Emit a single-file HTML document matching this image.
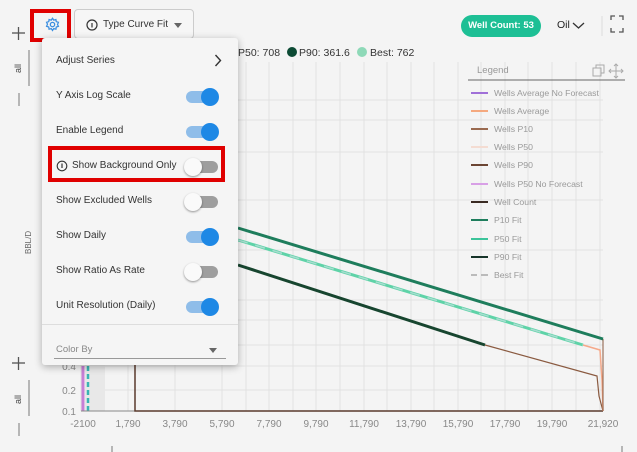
<!DOCTYPE html>
<html><head><meta charset="utf-8"><style>
*{margin:0;padding:0;box-sizing:border-box}
body{width:637px;height:452px;overflow:hidden;background:#f4f4f4;font-family:"Liberation Sans",sans-serif;position:relative;color:#333}
.abs{position:absolute}
.menu{position:absolute;left:42px;top:38px;width:196px;height:327px;background:#f5f5f5;border-radius:3px;box-shadow:0 2px 8px rgba(0,0,0,.3)}
.it{position:absolute;left:14px;font-size:10px;color:#333}
.tg{position:absolute;left:144px;width:32px;height:12px;border-radius:6px}
.tg.on{background:#8fbde9}
.tg.off{background:#9e9e9e}
.tg i{position:absolute;top:-3px;width:18px;height:18px;border-radius:50%;display:block}
.tg.on i{right:-1px;background:#1e88e5}
.tg.off i{left:-2px;background:#fafafa;box-shadow:0 1px 2px rgba(0,0,0,.4)}
.lg{position:absolute;left:471px;font-size:8.7px;color:#9a9a9a}
.lg b{display:inline-block;width:17px;height:2px;vertical-align:middle;margin-right:6px;margin-top:-2px}
</style></head><body>
<svg class="abs" style="left:0;top:0" width="637" height="452">
 <g stroke="#e2e2e2" stroke-width="1">
  <line x1="81" y1="62" x2="81" y2="411"/>
  <line x1="128" y1="62" x2="128" y2="411"/><line x1="175" y1="62" x2="175" y2="411"/><line x1="222" y1="62" x2="222" y2="411"/><line x1="269" y1="62" x2="269" y2="411"/><line x1="316" y1="62" x2="316" y2="411"/><line x1="364" y1="62" x2="364" y2="411"/><line x1="411" y1="62" x2="411" y2="411"/><line x1="458" y1="62" x2="458" y2="411"/><line x1="505" y1="62" x2="505" y2="411"/><line x1="552" y1="62" x2="552" y2="411"/><line x1="600" y1="62" x2="600" y2="411"/>
  <line x1="246" y1="62" x2="246" y2="411"/><line x1="293" y1="62" x2="293" y2="411"/><line x1="340" y1="62" x2="340" y2="411"/><line x1="387" y1="62" x2="387" y2="411"/><line x1="434" y1="62" x2="434" y2="411"/><line x1="481" y1="62" x2="481" y2="411"/><line x1="528" y1="62" x2="528" y2="411"/><line x1="576" y1="62" x2="576" y2="411"/>
  <line x1="81" y1="366" x2="603" y2="366"/><line x1="81" y1="390" x2="603" y2="390"/><line x1="81" y1="345" x2="603" y2="345"/><line x1="81" y1="320" x2="603" y2="320"/><line x1="81" y1="300" x2="603" y2="300"/><line x1="81" y1="250" x2="603" y2="250"/><line x1="81" y1="200" x2="603" y2="200"/><line x1="81" y1="152" x2="603" y2="152"/><line x1="81" y1="120" x2="603" y2="120"/><line x1="81" y1="100" x2="603" y2="100"/>
 </g>
 <rect x="85" y="340" width="20" height="71" fill="#e8e8e8"/>
 <line x1="83" y1="366" x2="83" y2="411" stroke="#c77fd6" stroke-width="3"/>
 <line x1="88" y1="366" x2="88" y2="411" stroke="#39b4b4" stroke-width="2.5" stroke-dasharray="5,3"/>
 <line x1="81" y1="411" x2="603" y2="411" stroke="#888" stroke-width="1"/>
 <polyline points="135,330 135,411 603,411" fill="none" stroke="#5a3a2c" stroke-width="1.5"/>
 <polyline points="485,345 597,376 599,396 603,411" fill="none" stroke="#8a5a40" stroke-width="1.2"/>
 <polyline points="583,345 600,350 602,380 603,411" fill="none" stroke="#f5a98a" stroke-width="1.5"/>
 <line x1="603" y1="339" x2="603" y2="411" stroke="#8a5a40" stroke-width="1"/>
 <line x1="238" y1="228" x2="603" y2="339" stroke="#1e7d5c" stroke-width="3"/>
 <line x1="238" y1="240" x2="583" y2="345" stroke="#5fd3a8" stroke-width="3"/>
 <line x1="238" y1="240" x2="583" y2="345" stroke="#a8ddd0" stroke-width="1.5" stroke-dasharray="10,8"/>
 <line x1="238" y1="265" x2="485" y2="345" stroke="#17452f" stroke-width="3"/>
 <line x1="468" y1="80" x2="625" y2="80" stroke="#666" stroke-width="1"/>
 <circle cx="292" cy="52" r="5" fill="#0c4a34"/><circle cx="362" cy="52" r="5" fill="#8ed9b8"/>
 <g stroke="#555" stroke-width="1.3"><line x1="12" y1="33" x2="25" y2="33"/><line x1="18.5" y1="27" x2="18.5" y2="40"/>
 <line x1="12" y1="363" x2="25" y2="363"/><line x1="18.5" y1="357" x2="18.5" y2="370"/></g>
 <g stroke="#777" stroke-width="1"><line x1="29" y1="50" x2="29" y2="86"/><line x1="19" y1="93" x2="19" y2="106"/>
 <line x1="29" y1="380" x2="29" y2="416"/><line x1="19" y1="423" x2="19" y2="436"/>
 <line x1="112" y1="446" x2="112" y2="452"/><line x1="622" y1="446" x2="622" y2="452"/></g>
 <line x1="602" y1="16" x2="602" y2="36" stroke="#ddd" stroke-width="1"/>
 <g fill="none" stroke="#555" stroke-width="1.3"><path d="M611 20v-4h4M619 16h4v4M623 28v4h-4M615 32h-4v-4"/></g>
 <g fill="none" stroke="#aaa" stroke-width="1"><rect x="593" y="68" width="8" height="8"/><path d="M596 68v-3h8v8h-3"/><path d="M616 64v14M609 71h14M614 66l2-2 2 2M614 76l2 2 2-2M611 69l-2 2 2 2M621 69l2 2-2 2"/></g>
 <text x="0" y="0" transform="translate(21,73) rotate(-90)" font-size="9" fill="#444" font-family="Liberation Sans">all</text>
 <text x="0" y="0" transform="translate(21,404) rotate(-90)" font-size="9" fill="#444" font-family="Liberation Sans">all</text>
 <text x="0" y="0" transform="translate(31,254) rotate(-90)" font-size="8" fill="#666" font-family="Liberation Sans">BBL/D</text>
 <g font-size="10" fill="#888" font-family="Liberation Sans" text-anchor="end"><text x="76" y="370">0.4</text><text x="76" y="394">0.2</text><text x="76" y="415">0.1</text></g>
 <g font-size="10" fill="#888" font-family="Liberation Sans" text-anchor="middle"><text x="83" y="427">-2100</text><text x="128" y="427">1,790</text><text x="175" y="427">3,790</text><text x="222" y="427">5,790</text><text x="269" y="427">7,790</text><text x="316" y="427">9,790</text><text x="364" y="427">11,790</text><text x="411" y="427">13,790</text><text x="458" y="427">15,790</text><text x="505" y="427">17,790</text><text x="552" y="427">19,790</text><text x="603" y="427">21,920</text></g>
 <text x="238" y="56" font-size="10.5" fill="#333" font-family="Liberation Sans">P50: 708</text>
 <text x="299" y="56" font-size="10.5" fill="#333" font-family="Liberation Sans">P90: 361.6</text>
 <text x="370" y="56" font-size="10.5" fill="#333" font-family="Liberation Sans">Best: 762</text>
</svg>
<div class="abs" style="left:74px;top:9px;width:120px;height:30px;border:1px solid #ccc;border-radius:4px;background:#f6f6f6"></div>
<svg class="abs" style="left:86px;top:19px" width="12" height="12"><circle cx="6" cy="6" r="5" fill="none" stroke="#333" stroke-width="1.2"/><line x1="6" y1="4" x2="6" y2="8.5" stroke="#333" stroke-width="1.2"/></svg>
<div class="abs" style="left:103px;top:19px;font-size:10px;color:#333">Type Curve Fit</div>
<div class="abs" style="left:174px;top:23px;width:0;height:0;border-left:4.5px solid transparent;border-right:4.5px solid transparent;border-top:5px solid #666"></div>
<div class="abs" style="left:30px;top:9px;width:41px;height:33px;border:4px solid #e00000"></div>
<svg class="abs" style="left:45px;top:17px" width="15" height="15" viewBox="0 0 24 24"><path fill="none" stroke="#3a8ee0" stroke-width="2" d="M12 2l2 3 3.5-1 .5 3.5 3.5 1-1.5 3.5 1.5 3-3.5 1-.5 3.5-3.5-1-2 3-2-3-3.5 1-.5-3.5-3.5-1 1.5-3.5L2.5 8.5l3.5-1 .5-3.5 3.5 1z"/><circle cx="12" cy="12" r="3.5" fill="none" stroke="#3a8ee0" stroke-width="2"/></svg>
<div class="abs" style="left:461px;top:15px;width:80px;height:22px;border-radius:11px;background:#1dbf95;color:#fff;font-size:9.5px;font-weight:bold;text-align:center;line-height:22px">Well Count: 53</div>
<div class="abs" style="left:557px;top:19px;font-size:10.5px;color:#222">Oil</div>
<svg class="abs" style="left:572px;top:21px" width="13" height="9"><path d="M1 2l5.5 5 5.5-5" fill="none" stroke="#333" stroke-width="1.3"/></svg>
<div class="abs" style="left:477px;top:65px;font-size:9.5px;color:#999">Legend</div>
<div class="lg" style="top:88px"><b style="background:#a070d8"></b>Wells Average No Forecast</div>
<div class="lg" style="top:106px"><b style="background:#f5a97f"></b>Wells Average</div>
<div class="lg" style="top:124px"><b style="background:#9a6a50"></b>Wells P10</div>
<div class="lg" style="top:142px"><b style="background:#f4dcd2"></b>Wells P50</div>
<div class="lg" style="top:160px"><b style="background:#6b4533"></b>Wells P90</div>
<div class="lg" style="top:179px"><b style="background:#d8a0e6"></b>Wells P50 No Forecast</div>
<div class="lg" style="top:197px"><b style="background:#3a2a22"></b>Well Count</div>
<div class="lg" style="top:215px"><b style="background:#1e7d5c"></b>P10 Fit</div>
<div class="lg" style="top:234px"><b style="background:#3cc49a"></b>P50 Fit</div>
<div class="lg" style="top:252px"><b style="background:#17352a"></b>P90 Fit</div>
<div class="lg" style="top:270px"><b style="background:linear-gradient(90deg,#bbb 0 6px,transparent 6px 10px,#bbb 10px)"></b>Best Fit</div>
<div class="menu">
 <div class="it" style="top:17px">Adjust Series</div>
 <svg class="abs" style="left:172px;top:16px" width="8" height="13"><path d="M1.5 1l5 5.5-5 5.5" fill="none" stroke="#333" stroke-width="1.4"/></svg>
 <div class="it" style="top:52px">Y Axis Log Scale</div><div class="tg on" style="top:53px"><i></i></div>
 <div class="it" style="top:87px">Enable Legend</div><div class="tg on" style="top:88px"><i></i></div>
 <div class="it" style="top:122px;left:30px">Show Background Only</div><div class="tg off" style="top:123px"><i></i></div>
 <div class="it" style="top:157px">Show Excluded Wells</div><div class="tg off" style="top:158px"><i></i></div>
 <div class="it" style="top:192px">Show Daily</div><div class="tg on" style="top:193px"><i></i></div>
 <div class="it" style="top:227px">Show Ratio As Rate</div><div class="tg off" style="top:228px"><i></i></div>
 <div class="it" style="top:262px">Unit Resolution (Daily)</div><div class="tg on" style="top:263px"><i></i></div>
 <div class="abs" style="left:0;top:286px;width:196px;height:1px;background:#ddd"></div>
 <div class="it" style="top:306px;font-size:9.5px;color:#888">Color By</div>
 <div class="abs" style="left:167px;top:310px;width:0;height:0;border-left:4.5px solid transparent;border-right:4.5px solid transparent;border-top:5px solid #666"></div>
 <div class="abs" style="left:12px;top:320px;width:172px;height:1px;background:#999"></div>
</div>
<svg class="abs" style="left:56px;top:160px" width="12" height="12"><circle cx="6" cy="6" r="4.8" fill="none" stroke="#333" stroke-width="1.1"/><line x1="6" y1="3.5" x2="6" y2="8" stroke="#333" stroke-width="1.2"/></svg>
<div class="abs" style="left:48px;top:146px;width:177px;height:36px;border:4px solid #e00000"></div>
</body></html>
